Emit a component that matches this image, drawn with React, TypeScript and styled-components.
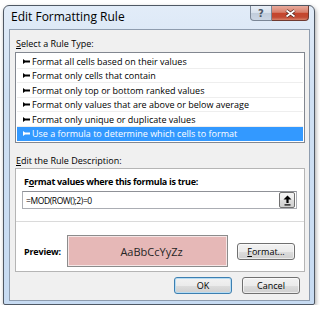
import React from 'react';
import styled, { createGlobalStyle } from 'styled-components';

const GlobalStyle = createGlobalStyle`
	body {
		margin: 0;
		background: #ffffff;
		font-family: 'Open Sans', 'Noto Sans', 'Liberation Sans', sans-serif;
		font-size: 9px;
		color: #000000;
	}
`;

const Window = styled.div`
	box-sizing: border-box;
	width: 312px;
	margin: 5px 0 0 3px;
	padding: 0 4px 3px 5px;
	border: 1px solid #4f5864;
	border-radius: 6px 6px 2px 2px;
	background: linear-gradient(180deg, #e2ecf8 0%, #cfe0f3 30%, #c7dbf2 100%);
	box-shadow: 1px 2px 4px rgba(0, 0, 0, 0.35);
`;

const TitleBar = styled.div`
	height: 23px;
	display: flex;
	justify-content: space-between;
	align-items: flex-start;
`;

const Title = styled.div`
	margin: 3px 0 0 2px;
	line-height: 16px;
	font-size: 12px;
`;

const Caption = styled.div`
	display: flex;
	margin-right: 1px;
`;

const HelpButton = styled.div`
	box-sizing: border-box;
	width: 22px;
	height: 15px;
	border: 1px solid #7a8696;
	border-top: none;
	border-radius: 0 0 0 4px;
	background: linear-gradient(180deg, #e8eef6 0%, #d6e0ec 50%, #c0ccdb 51%, #cbd6e4 100%);
	display: flex;
	align-items: center;
	justify-content: center;
	font: bold 10px 'DejaVu Sans', sans-serif;
	color: #4a5564;
`;

const CloseButton = styled.div`
	box-sizing: border-box;
	width: 37px;
	height: 15px;
	border: 1px solid #6f3a31;
	border-left: none;
	border-top: none;
	border-radius: 0 0 4px 0;
	background: linear-gradient(180deg, #e9aa9c 0%, #d8806c 45%, #c5452c 52%, #c24a33 80%, #d8826a 100%);
	display: flex;
	align-items: center;
	justify-content: center;
`;

const Client = styled.div`
	display: flex;
	flex-direction: column;
	padding: 6px 0 6px 0;
	border: 1px solid #8e9cae;
	background: #f0f0f0;
`;

const GroupLabel = styled.div<{ $top?: number }>`
	padding-left: 6px;
	line-height: 15px;
	margin-top: ${(p) => p.$top ?? 0}px;
`;

const Key = styled.span`
	text-decoration: underline;
	text-underline-offset: 1px;
`;

const ListBox = styled.div`
	box-sizing: border-box;
	width: 290px;
	margin: 1px 0 0 5px;
	padding: 1px;
	border: 1px solid #828790;
	background: #ffffff;
`;

const RuleRow = styled.div<{ $selected?: boolean }>`
	height: 14.5px;
	display: flex;
	align-items: center;
	gap: 2px;
	padding-left: 6px;
	white-space: nowrap;
	box-shadow: inset 0 -1px 0 ${(p) => (p.$selected ? '#3399ff' : '#eeeeee')};
	background: ${(p) => (p.$selected ? '#3399ff' : 'transparent')};
	color: ${(p) => (p.$selected ? '#ffffff' : '#000000')};
`;

const DescBox = styled.div`
	box-sizing: border-box;
	width: 290px;
	margin-left: 5px;
	padding: 5px 0 4px 0;
	border: 1px solid #b5b5b5;
	background: #ffffff;
`;

const BoldLabel = styled.div`
	padding-left: 8px;
	line-height: 15px;
	font-size: 9px;
	font-weight: bold;
	letter-spacing: -0.3px;
`;

const FormulaInput = styled.div`
	box-sizing: border-box;
	width: 275px;
	height: 18px;
	margin: 2px 0 0 6px;
	padding: 0 1px 0 3px;
	border: 1px solid #abadb3;
	border-top-color: #8f9197;
	display: flex;
	align-items: center;
	justify-content: space-between;
	font-size: 8.5px;
	letter-spacing: -0.4px;
`;

const SmallButton = styled.div`
	box-sizing: border-box;
	width: 16px;
	height: 16px;
	border: 1px solid #707070;
	border-radius: 2px;
	background: linear-gradient(180deg, #f4f4f4 0%, #ebebeb 50%, #dddddd 51%, #cfcfcf 100%);
	display: flex;
	align-items: center;
	justify-content: center;
`;

const Separator = styled.div`
	height: 1px;
	margin-top: 12px;
	background: #dadada;
`;

const PreviewRow = styled.div`
	display: flex;
	align-items: center;
	margin-top: 13px;
	padding-left: 8px;
`;

const PreviewLabel = styled.div`
	width: 43px;
	font-weight: bold;
	font-size: 9px;
	letter-spacing: -0.2px;
`;

const PreviewBox = styled.div`
	box-sizing: border-box;
	width: 161px;
	height: 32px;
	padding-left: 8px;
	border: 1px solid #8c8c8c;
	box-shadow: inset 0 0 0 1px #f6e6e6;
	background: #e6b8b7;
	display: flex;
	align-items: center;
	justify-content: center;
	font-size: 11px;
	color: #262626;
`;

const PushButton = styled.div<{ $default?: boolean; $left?: number }>`
	box-sizing: border-box;
	width: 58px;
	height: 17px;
	margin-left: ${(p) => p.$left ?? 0}px;
	border: 1px solid ${(p) => (p.$default ? '#3c7fb1' : '#707070')};
	border-radius: 3px;
	background: linear-gradient(180deg, #f2f2f2 0%, #ebebeb 50%, #dddddd 51%, #cfcfcf 100%);
	box-shadow: inset 0 0 0 1px ${(p) => (p.$default ? '#b6dcf3' : 'rgba(255,255,255,0.6)')};
	display: flex;
	align-items: center;
	justify-content: center;
	font-size: 9px;
`;

const ButtonRow = styled.div`
	display: flex;
	justify-content: flex-end;
	gap: 10px;
	margin-top: 5px;
	padding-right: 9px;
`;

const Marker = () => (
	<svg width="7" height="5" viewBox="0 0 7 5">
		<polygon points="0,0 2,1.5 7,1.5 7,3.5 2,3.5 0,5" fill="currentColor" />
	</svg>
);

const rules = [
	'Format all cells based on their values',
	'Format only cells that contain',
	'Format only top or bottom ranked values',
	'Format only values that are above or below average',
	'Format only unique or duplicate values',
	'Use a formula to determine which cells to format',
];

export default function App() {
	return (
		<>
			<GlobalStyle />
			<Window>
				<TitleBar>
					<Title>Edit Formatting Rule</Title>
					<Caption>
						<HelpButton>?</HelpButton>
						<CloseButton>
							<svg width="11" height="9" viewBox="0 0 11 9">
								<path d="M1.5,1.5 L9.5,7.5 M9.5,1.5 L1.5,7.5" stroke="#4a1e16" strokeWidth="3.4" />
								<path d="M1.5,1.5 L9.5,7.5 M9.5,1.5 L1.5,7.5" stroke="#ffffff" strokeWidth="1.8" />
							</svg>
						</CloseButton>
					</Caption>
				</TitleBar>
				<Client>
					<GroupLabel>
						<Key>S</Key>elect a Rule Type:
					</GroupLabel>
					<ListBox>
						{rules.map((r, i) => (
							<RuleRow key={r} $selected={i === rules.length - 1}>
								<Marker />
								{r}
							</RuleRow>
						))}
					</ListBox>
					<GroupLabel $top={10}>
						<Key>E</Key>dit the Rule Description:
					</GroupLabel>
					<DescBox>
						<BoldLabel>
							F<Key>o</Key>rmat values where this formula is true:
						</BoldLabel>
						<FormulaInput>
							<span>=MOD(ROW();2)=0</span>
							<SmallButton>
								<svg width="9" height="11" viewBox="0 0 9 11">
									<path d="M4.5,0.5 L8.5,4.5 L5.6,4.5 L5.6,8 L3.4,8 L3.4,4.5 L0.5,4.5 Z" fill="#000000" />
									<rect x="1.5" y="9.3" width="6" height="1.2" fill="#000000" />
								</svg>
							</SmallButton>
						</FormulaInput>
						<Separator />
						<PreviewRow>
							<PreviewLabel>Preview:</PreviewLabel>
							<PreviewBox>AaBbCcYyZz</PreviewBox>
							<PushButton $left={9}>
								<Key>F</Key>ormat...
							</PushButton>
						</PreviewRow>
					</DescBox>
					<ButtonRow>
						<PushButton $default>OK</PushButton>
						<PushButton>Cancel</PushButton>
					</ButtonRow>
				</Client>
			</Window>
		</>
	);
}
